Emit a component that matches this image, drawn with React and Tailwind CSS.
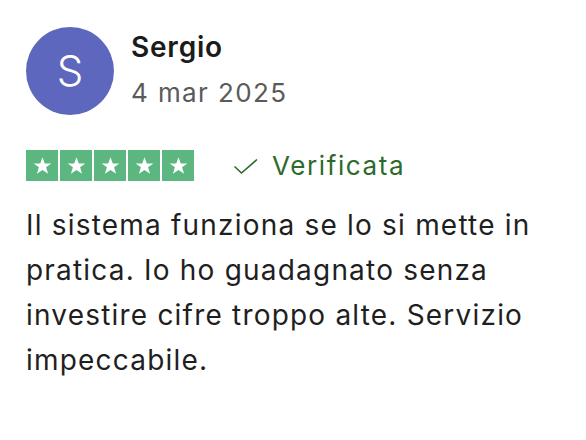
import React from 'react';

function Star() {
  return (
    <div className="w-[32px] h-[31px] bg-[#5cb67f] flex items-center justify-center">
      <svg width="21" height="21" viewBox="0 0 24 24">
        <path
          d="M12 2.5l2.6 7.1h7.5l-6 4.5 2.3 7.3L12 17l-6.4 4.4 2.3-7.3-6-4.5h7.5z"
          fill="#ffffff"
        />
      </svg>
    </div>
  );
}

function App() {
  const font = { fontFamily: 'Inter, "Liberation Sans", sans-serif' };

  return (
    <div className="w-[586px] h-[440px] bg-white pl-[26px] pt-[27px]" style={font}>
      <div className="flex items-center gap-[17px]">
        <div className="w-[88px] h-[88px] rounded-full bg-[#5c67bd] flex items-center justify-center text-white text-[42px] font-light leading-none">
          S
        </div>
        <div className="flex flex-col -mt-[2px]">
          <span className="text-[28px] font-semibold text-[#1b1b1b] leading-[34px] tracking-[0.8px]">Sergio</span>
          <span className="text-[26px] text-[#5a5a5a] leading-[34px] mt-[12px] tracking-[1.4px]">4 mar 2025</span>
        </div>
      </div>

      <div className="flex items-center mt-[35px]">
        <div className="flex gap-[2px]">
          <Star />
          <Star />
          <Star />
          <Star />
          <Star />
        </div>
        <div className="flex items-center ml-[39px] gap-[13px] text-[#2d6a2b]">
          <svg width="26" height="18" viewBox="0 0 26 18" fill="none">
            <path d="M1.5 9.5l7 6.5L24 2.5" stroke="#2d6a2b" strokeWidth="1.6" />
          </svg>
          <span className="text-[26px] leading-none tracking-[1.6px]">Verificata</span>
        </div>
      </div>

      <p className="mt-[22px] w-[530px] text-[28px] leading-[45px] tracking-[1.2px] text-[#1f1f1f]">
        Il sistema funziona se lo si mette in pratica. Io ho guadagnato senza investire cifre troppo alte. Servizio impeccabile.
      </p>
    </div>
  );
}

export default App;
